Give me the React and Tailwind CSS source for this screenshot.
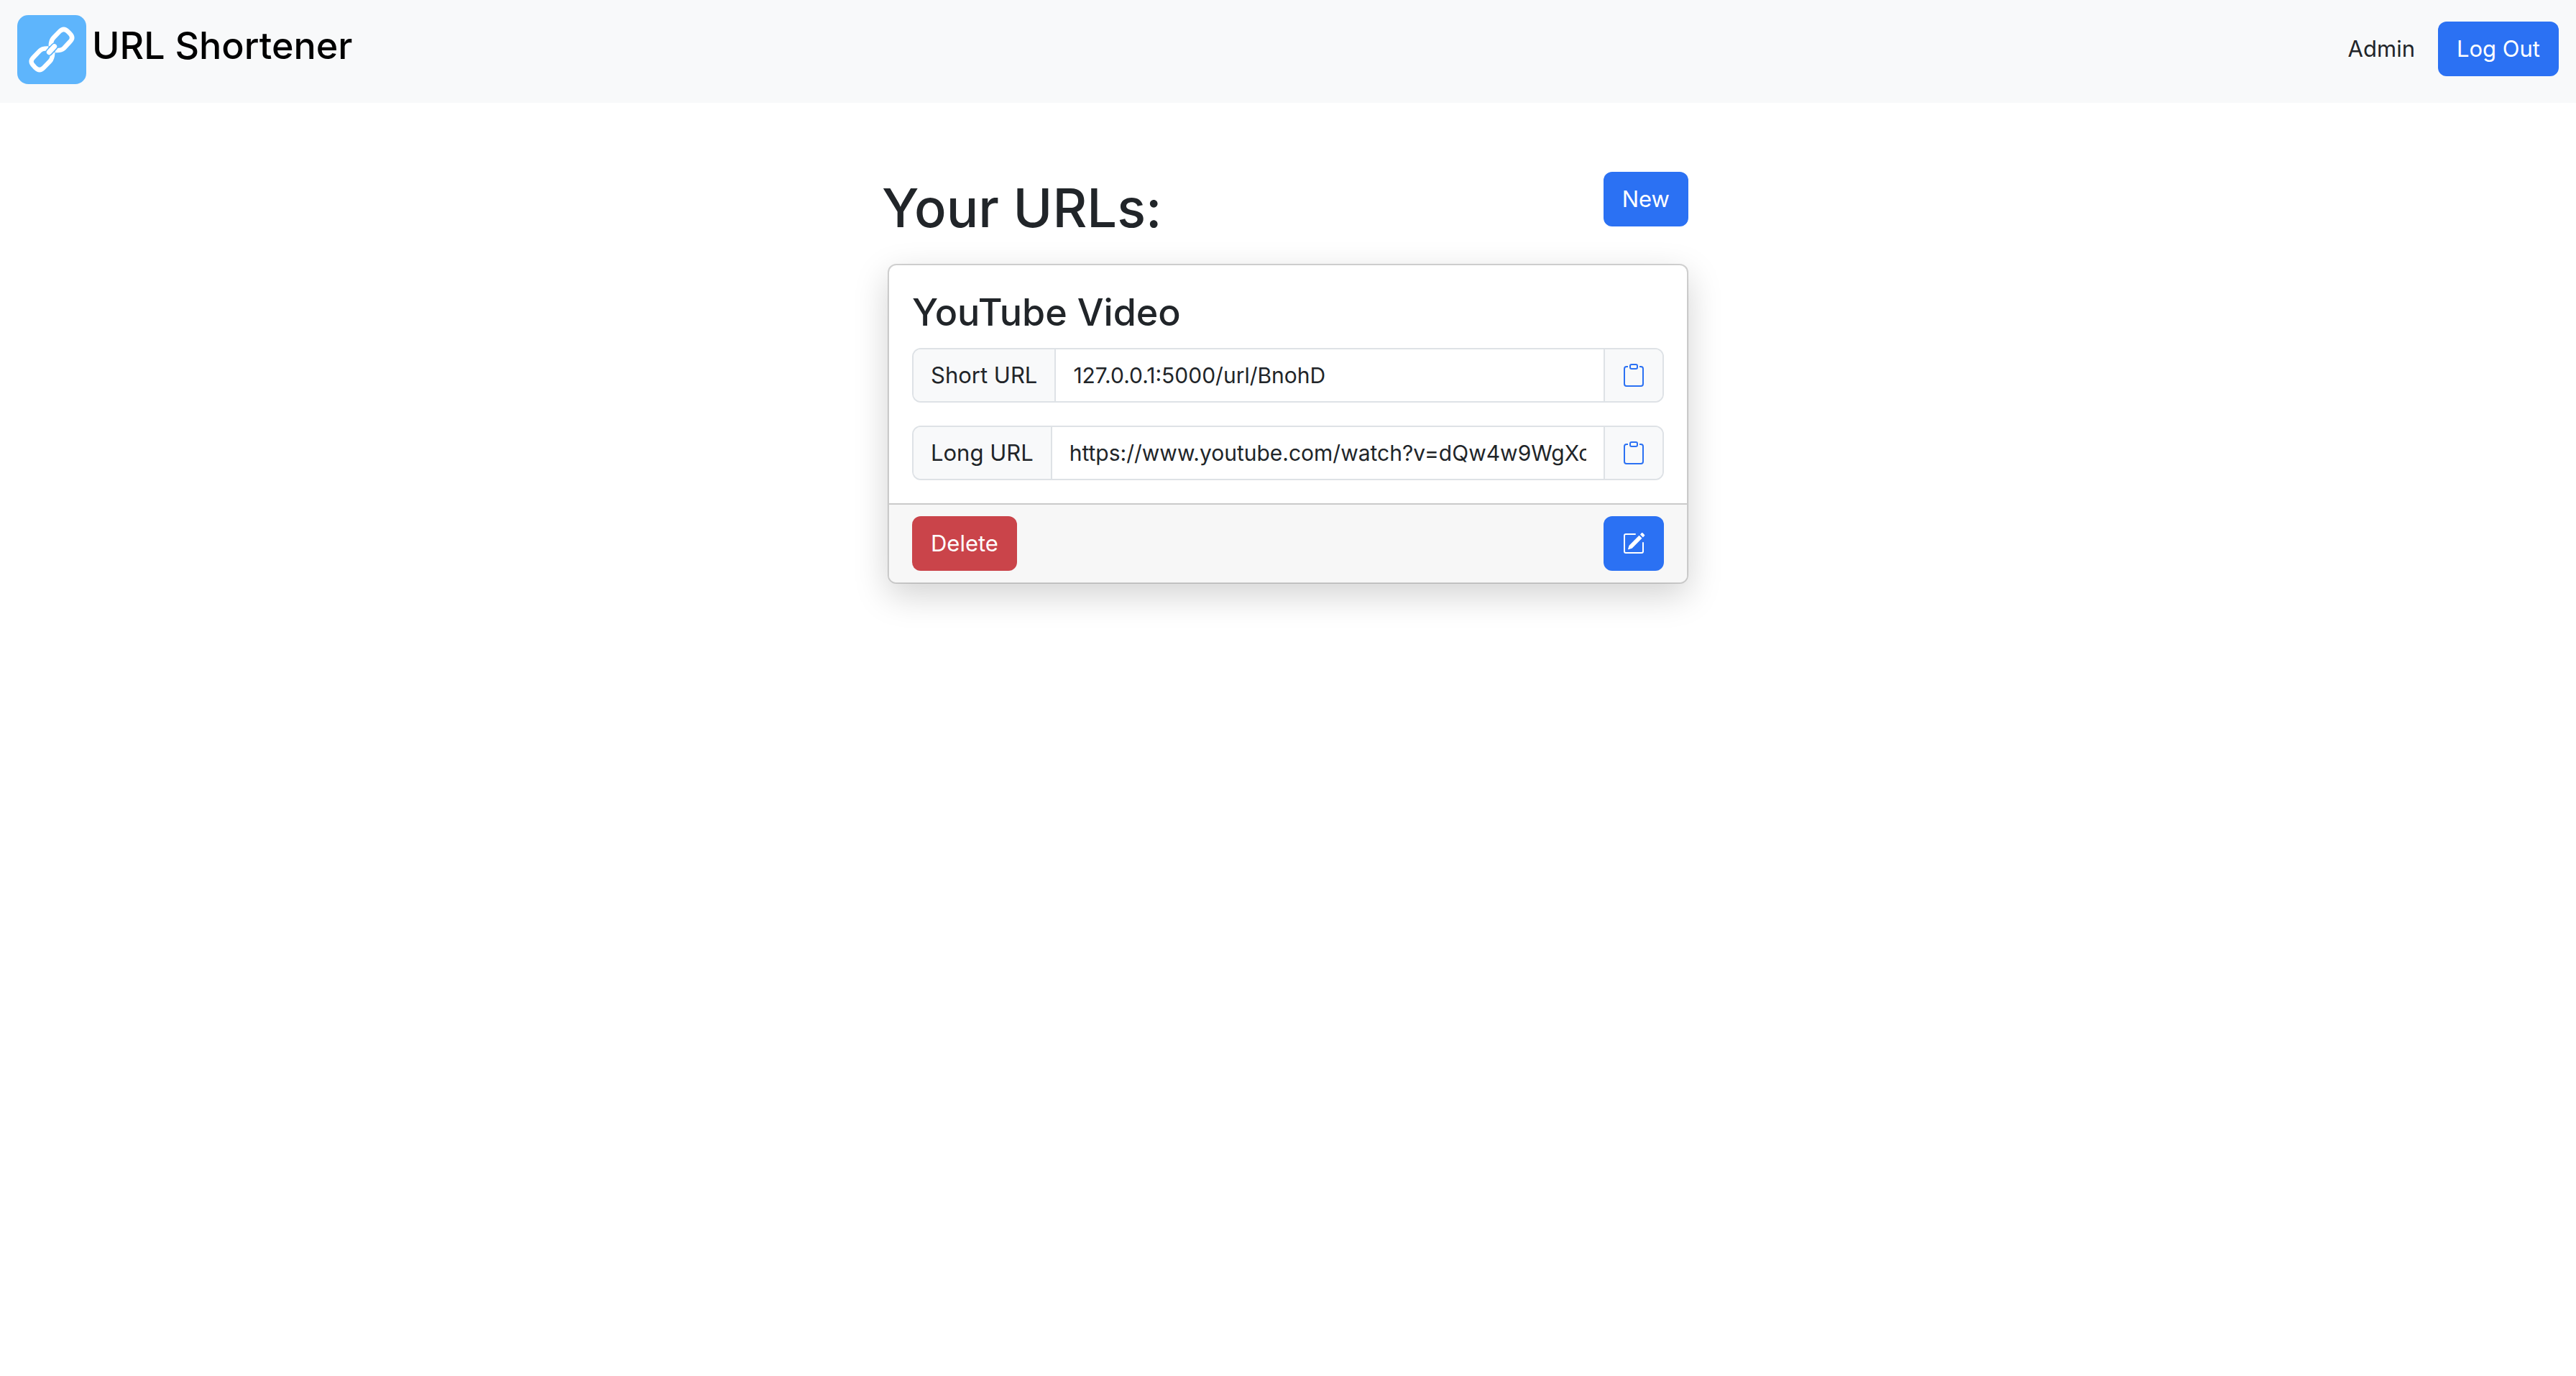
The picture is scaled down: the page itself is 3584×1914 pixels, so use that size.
import { BsClipboard, BsPencilSquare } from "react-icons/bs";

const buttonBase =
  "inline-flex h-[76px] items-center justify-center rounded-xl px-[26px] text-[31px] leading-[48px] text-white";

const urlEntries = [
  {
    id: "youtube-video",
    title: "YouTube Video",
    shortUrl: "127.0.0.1:5000/url/BnohD",
    longUrl: "https://www.youtube.com/watch?v=dQw4w9WgXcQ",
  },
];

function LogoMark() {
  return (
    <svg viewBox="0 0 288 288" className="size-24 shrink-0" aria-hidden="true">
      <rect width="288" height="288" rx="46" fill="#5eb5fc" />
      <g fill="none" stroke="#fff" strokeWidth="19" strokeLinejoin="round">
        <path d="M140 130Q140 106 152 94L177 68Q194 51 211 68L220 77Q237 94 220 111L195 138Q184 149 158 147" />
        <path d="M130 139Q104 138 94 149L67 177Q50 194 68 211L76 220Q93 237 110 220L137 192Q147 182 148 156" />
        <path d="M133 155L155 131" stroke="#5eb5fc" strokeWidth="31" strokeLinecap="round" />
        <path d="M133 155L155 131" strokeWidth="21" strokeLinecap="round" />
      </g>
    </svg>
  );
}

function UrlField({ id, label, value }) {
  return (
    <div className="flex h-[76px] w-full overflow-hidden rounded-xl border-2 border-[#dee2e6] text-[31px] leading-[48px]">
      <label htmlFor={id} className="flex items-center whitespace-nowrap border-r-2 border-[#dee2e6] bg-[#f8f9fa] px-6">
        {label}
      </label>
      <div className="flex min-w-0 flex-1 items-center bg-white px-6">
        <input
          id={id}
          type="text"
          readOnly
          defaultValue={value}
          className="w-full min-w-0 bg-transparent text-[30px] outline-none"
        />
      </div>
      <button
        type="button"
        aria-label={`Copy ${label}`}
        className="flex items-center border-l-2 border-[#dee2e6] bg-[#f8f9fa] px-6 text-[#2b71f3]"
      >
        <BsClipboard className="size-8" />
      </button>
    </div>
  );
}

function UrlCard({ entry }) {
  return (
    <article className="overflow-hidden rounded-xl border-2 border-black/[.175] bg-white bg-clip-padding shadow-[0_16px_48px_rgba(0,0,0,0.175)]">
      <div className="p-8">
        <h2 className="mb-4 text-[52px] leading-[67px] font-medium">{entry.title}</h2>
        <div className="flex flex-col gap-8">
          <UrlField id={`${entry.id}-short`} label="Short URL" value={entry.shortUrl} />
          <UrlField id={`${entry.id}-long`} label="Long URL" value={entry.longUrl} />
        </div>
      </div>
      <div className="flex items-center justify-between border-t-2 border-[#cacaca] bg-[#f7f7f7] px-8 py-4">
        <button type="button" className={`${buttonBase} bg-[#ca444a]`}>
          Delete
        </button>
        <button type="button" aria-label="Edit" className={`${buttonBase} bg-[#2b71f3]`}>
          <BsPencilSquare className="size-8" />
        </button>
      </div>
    </article>
  );
}

export default function App() {
  return (
    <div className="min-h-screen bg-white font-['Inter','Liberation_Sans',sans-serif] text-[#212529]">
      <nav className="flex items-center justify-between bg-[#f8f9fa] px-6 pt-[21px] pb-[26px]">
        <a href="#" className="flex items-start gap-2 text-[52px] leading-[86px] font-medium text-black">
          <LogoMark />
          URL Shortener
        </a>
        <div className="flex items-center gap-8 pb-0.5">
          <a href="#admin" className="text-[31px] leading-[48px]">Admin</a>
          <button type="button" className={`${buttonBase} bg-[#2b71f3]`}>Log Out</button>
        </div>
      </nav>
      <main className="mx-auto mt-24 w-full max-w-[1114px]">
        <header className="mb-4 -ml-2 flex items-start justify-between pb-3">
          <h1 className="text-[74px] leading-[100px] font-medium">Your URLs:</h1>
          <button type="button" className={`${buttonBase} bg-[#2b71f3]`}>New</button>
        </header>
        {urlEntries.map((entry) => (
          <UrlCard key={entry.id} entry={entry} />
        ))}
      </main>
    </div>
  );
}
